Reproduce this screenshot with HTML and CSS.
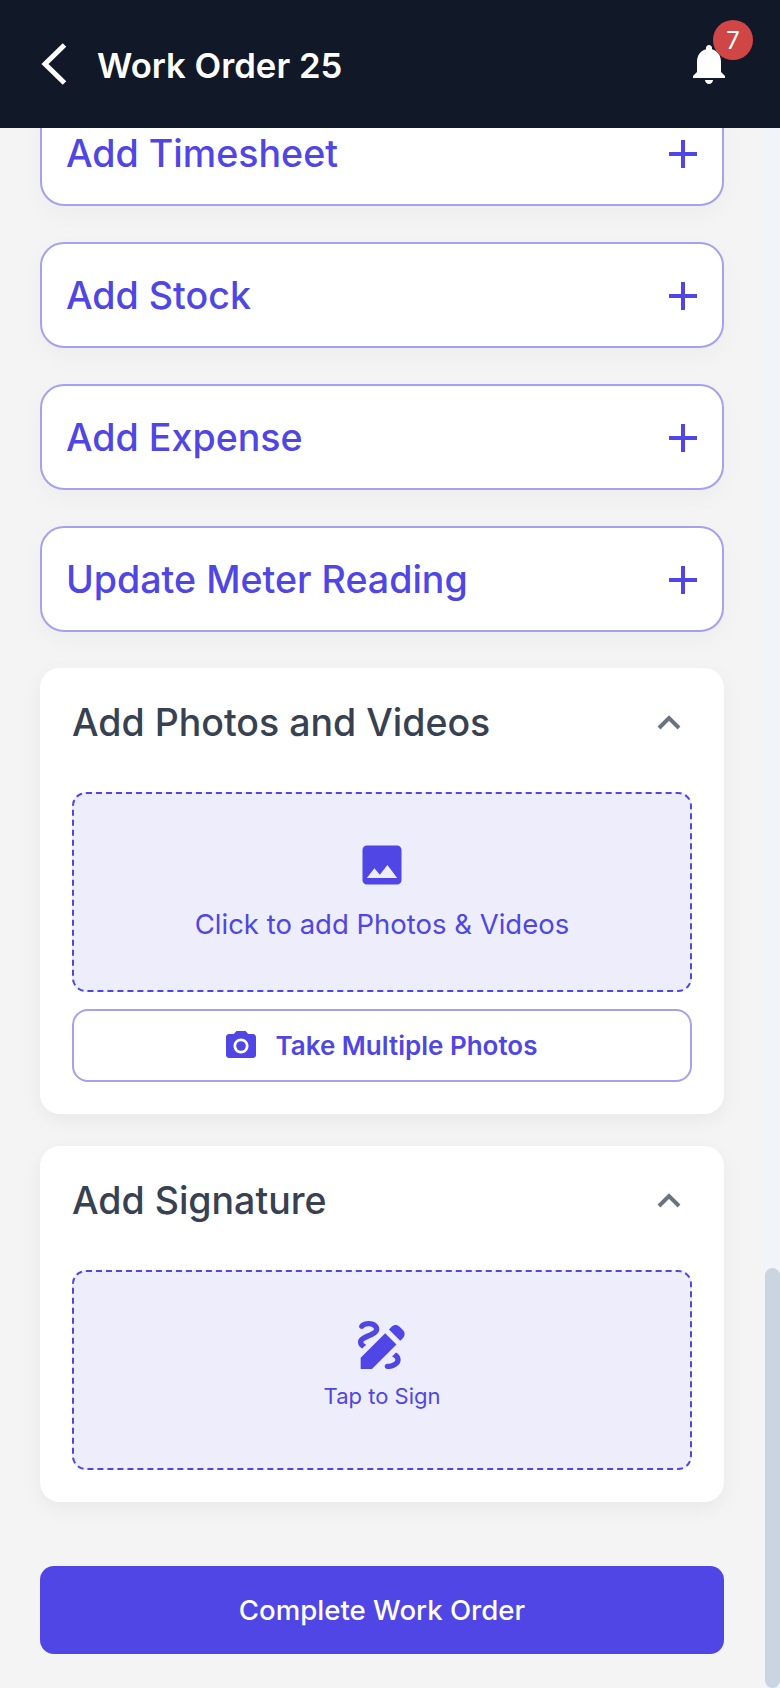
FILE: index.html
```html
<!DOCTYPE html>
<html lang="en">
<head>
  <meta charset="UTF-8">
  <title>Work Order 25</title>
  <link rel="stylesheet" href="styles.css">
</head>

<body>

<div class="app">

  <header class="topbar">
    <div class="topbar-left">
      <svg class="back-icon" viewBox="0 0 26 42"><path d="M23.5 2 4 21l19.5 19"/></svg>
      <span class="topbar-title">Work Order 25</span>
    </div>
    <div class="bell-wrap">
      <svg class="bell-icon" viewBox="0 0 24 24"><path d="M12 22c1.1 0 2-.9 2-2h-4c0 1.1.89 2 2 2zm6-6v-5c0-3.07-1.64-5.64-4.5-6.32V4c0-.83-.67-1.5-1.5-1.5s-1.5.67-1.5 1.5v.68C7.63 5.36 6 7.92 6 11v5l-2 2v1h16v-1l-2-2z"/></svg>
      <span class="badge">7</span>
    </div>
  </header>

  <main class="scroller">
    <div class="content">

      <div class="add-row">
        <span>Add Timesheet</span>
        <svg class="plus-icon" viewBox="0 0 28 28"><path d="M14 0v28M0 14h28"/></svg>
      </div>
      <div class="add-row">
        <span>Add Stock</span>
        <svg class="plus-icon" viewBox="0 0 28 28"><path d="M14 0v28M0 14h28"/></svg>
      </div>
      <div class="add-row">
        <span>Add Expense</span>
        <svg class="plus-icon" viewBox="0 0 28 28"><path d="M14 0v28M0 14h28"/></svg>
      </div>
      <div class="add-row">
        <span>Update Meter Reading</span>
        <svg class="plus-icon" viewBox="0 0 28 28"><path d="M14 0v28M0 14h28"/></svg>
      </div>

      <section class="panel">
        <div class="panel-head">
          <h2>Add Photos and Videos</h2>
          <svg class="chevron-icon" viewBox="0 0 24 15"><path d="M2 13 12 3l10 10"/></svg>
        </div>
        <div class="dropzone">
          <svg class="photo-icon" viewBox="0 0 24 24"><path d="M21 19V5c0-1.1-.9-2-2-2H5c-1.1 0-2 .9-2 2v14c0 1.1.9 2 2 2h14c1.1 0 2-.9 2-2zM8.5 13.5l2.5 3.01L14.5 12l4.5 6H5l3.5-4.5z"/></svg>
          <span class="dropzone-text">Click to add Photos &amp; Videos</span>
        </div>
        <div class="photos-btn">
          <svg class="camera-icon" viewBox="0 0 24 24"><circle cx="12" cy="12" r="3.2"/><path d="M9 2 7.17 4H4c-1.1 0-2 .9-2 2v12c0 1.1.9 2 2 2h16c1.1 0 2-.9 2-2V6c0-1.1-.9-2-2-2h-3.17L15 2H9zm3 15c-2.76 0-5-2.24-5-5s2.24-5 5-5 5 2.24 5 5-2.24 5-5 5z"/></svg>
          <span>Take Multiple Photos</span>
        </div>
      </section>

      <section class="panel">
        <div class="panel-head">
          <h2>Add Signature</h2>
          <svg class="chevron-icon" viewBox="0 0 24 15"><path d="M2 13 12 3l10 10"/></svg>
        </div>
        <div class="dropzone dropzone-sign">
          <svg class="sign-icon" viewBox="0 0 24 24"><path d="M18.85 10.39l1.06-1.06c.78-.78.78-2.05 0-2.83L18.5 5.09c-.78-.78-2.05-.78-2.83 0l-1.06 1.06 4.24 4.24zM13.19 7.56 4 16.76V21h4.24l9.19-9.19-4.24-4.25zM19 17.5c0 2.19-2.54 3.5-5 3.5-.55 0-1-.45-1-1s.45-1 1-1c1.54 0 3-.73 3-1.5 0-.47-.48-.87-1.23-1.2l1.48-1.48c1.07.63 1.75 1.47 1.75 2.68zM4.58 13.35C3.61 12.79 3 12.06 3 11c0-1.8 1.89-2.63 3.56-3.36C7.59 7.18 9 6.56 9 6c0-.41-.78-1-2-1-1.26 0-1.8.61-1.83.64-.35.41-.98.46-1.4.12-.41-.34-.49-.95-.15-1.38C3.73 4.24 4.76 3 7 3c2.24 0 4 1.32 4 3 0 1.87-1.93 2.72-3.64 3.47C6.42 9.88 5 10.5 5 11c0 .31.43.6 1.07.86l-1.49 1.49z"/></svg>
          <span class="sign-text">Tap to Sign</span>
        </div>
      </section>

      <button class="complete-btn">Complete Work Order</button>

    </div>

    <div class="scrollbar">
      <div class="scrollbar-thumb"></div>
    </div>
  </main>

</div>

</body>
</html>
```

FILE: styles.css
```css
* {
  box-sizing: border-box;
}

html, body {
  height: 100%;
}

body {
  margin: 0;
  font-family: Inter, "Noto Sans", sans-serif;
  background-color: #f4f4f5;
  color: #374151;
}

.app {
  height: 1688px;
  display: flex;
  flex-direction: column;
  overflow: hidden;
}

/* top bar */
.topbar {
  height: 128px;
  flex-shrink: 0;
  background-color: #111827;
  display: flex;
  justify-content: space-between;
  align-items: center;
  padding: 0 47px 0 41px;
}

.topbar-left {
  display: flex;
  align-items: center;
  gap: 30px;
}

.back-icon {
  width: 26px;
  height: 42px;
  fill: none;
  stroke: #fff;
  stroke-width: 5;
}

.topbar-title {
  color: #fff;
  font-size: 34.7px;
  font-weight: 600;
  padding-top: 1px;
}

.bell-wrap {
  position: relative;
  width: 48px;
  height: 48px;
}

.bell-icon {
  width: 48px;
  height: 48px;
  fill: #fff;
}

.badge {
  position: absolute;
  top: -20px;
  left: 28px;
  width: 40px;
  height: 40px;
  border-radius: 50%;
  background-color: #d04545;
  color: #fff;
  font-size: 24px;
  display: flex;
  align-items: center;
  justify-content: center;
}

/* scrolled content */
.scroller {
  position: relative;
  flex: 1;
  overflow: hidden;
}

.content {
  width: 764px;
  padding: 0 40px;
  margin-top: -28px;
  display: flex;
  flex-direction: column;
}

.add-row {
  height: 106px;
  margin-bottom: 36px;
  padding: 1px 25px 0 24px;
  display: flex;
  justify-content: space-between;
  align-items: center;
  background-color: #fff;
  border: 2px solid #a5a0f0;
  border-radius: 24px;
  color: #4f46e5;
  font-size: 37.6px;
  font-weight: 500;
  box-shadow: 0 8px 24px rgba(0, 0, 0, 0.03);
}

.plus-icon {
  width: 28px;
  height: 28px;
  fill: none;
  stroke: #4f46e5;
  stroke-width: 4;
}

.panel {
  background-color: #fff;
  border-radius: 20px;
  padding: 0 32px;
  margin-bottom: 32px;
  box-shadow: 0 6px 20px rgba(0, 0, 0, 0.05);
}

.panel-head {
  height: 124px;
  display: flex;
  justify-content: space-between;
  align-items: center;
  padding: 1px 11px 16px 0;
}

.panel-head h2 {
  margin: 0;
  font-size: 37.5px;
  font-weight: 500;
  color: #374151;
}

.chevron-icon {
  width: 24px;
  height: 15px;
  fill: none;
  stroke: #6b7280;
  stroke-width: 4;
}

.dropzone {
  height: 200px;
  padding-bottom: 5px;
  background-color: #eeedfb;
  border: 2px dashed #4f46e5;
  border-radius: 14px;
  display: flex;
  flex-direction: column;
  align-items: center;
  justify-content: center;
  color: #4f46e5;
}

.photo-icon {
  width: 52px;
  height: 52px;
  fill: #4f46e5;
}

.dropzone-text {
  margin-top: 16px;
  font-size: 27.5px;
}

.sign-icon {
  width: 64px;
  height: 64px;
  fill: #4f46e5;
}

.sign-text {
  margin-top: 6px;
  font-size: 22px;
}

.photos-btn {
  height: 73px;
  margin: 17px 0 32px;
  padding-right: 4px;
  background-color: #fff;
  border: 2px solid #a5a0f0;
  border-radius: 16px;
  display: flex;
  align-items: center;
  justify-content: center;
  gap: 17px;
  color: #4f46e5;
  font-size: 26px;
  font-weight: 600;
}

.camera-icon {
  width: 36px;
  height: 36px;
  fill: #4f46e5;
}

.dropzone-sign {
  margin-bottom: 32px;
  padding-bottom: 18px;
}

.complete-btn {
  height: 88px;
  margin-top: 32px;
  border: none;
  border-radius: 14px;
  background-color: #4f46e5;
  color: #fff;
  font-family: inherit;
  font-size: 27.6px;
  font-weight: 500;
}

/* fake scrollbar */
.scrollbar {
  position: absolute;
  top: 0;
  bottom: 0;
  right: 0;
  width: 16px;
  background-color: #f1f5f9;
}

.scrollbar-thumb {
  position: absolute;
  top: 1140px;
  bottom: 0;
  left: 1px;
  right: 0;
  border-radius: 8px;
  background-color: #cbd5e1;
}
```
